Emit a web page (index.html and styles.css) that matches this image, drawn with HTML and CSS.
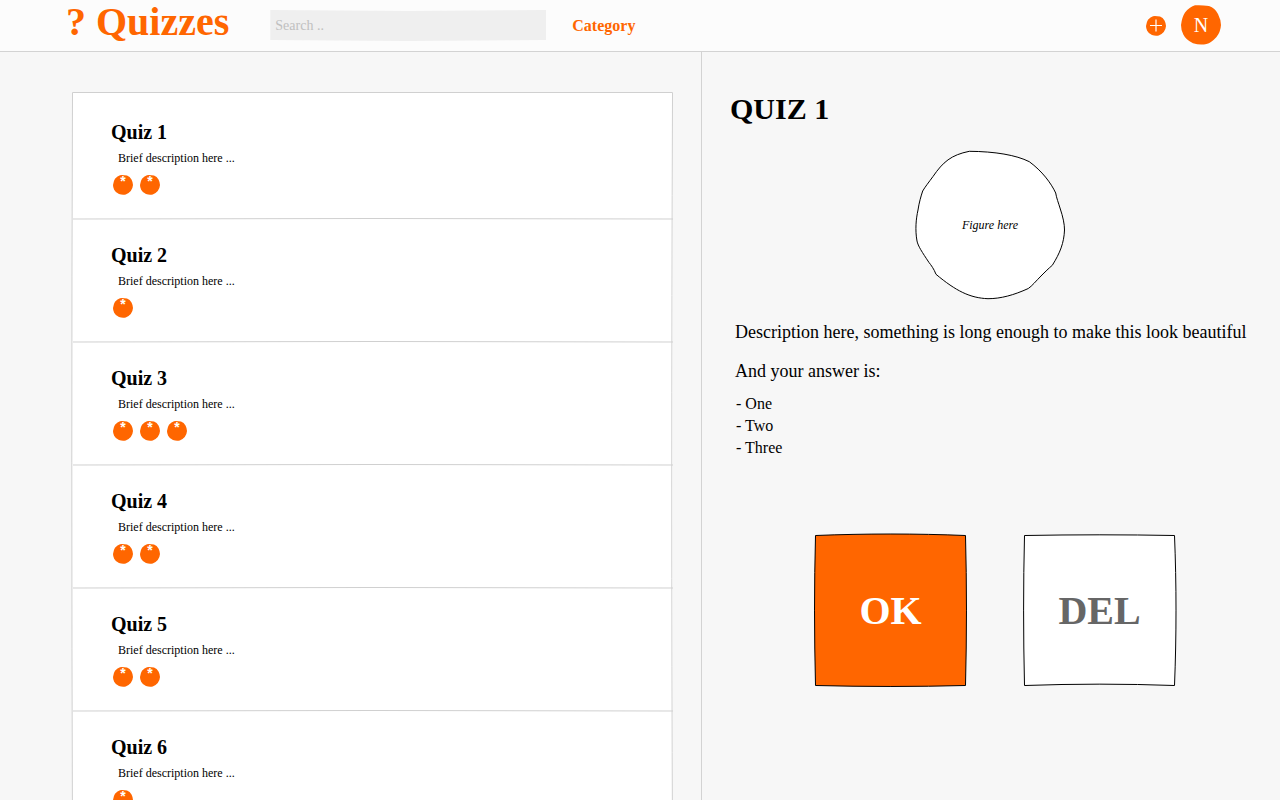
FILE: index.html
```html
<!DOCTYPE html>
<html lang="en">
<head>
<meta charset="utf-8">
<meta name="viewport" content="width=device-width, initial-scale=1">
<title>Quizzes</title>
<link rel="stylesheet" href="styles.css">
</head>
<body>
<svg class="defs" aria-hidden="true">
  <symbol id="blob" viewBox="0 0 40 40"><path d="M14 .3Q20 -.2 28 1Q34 3 37 9Q40 15 40 20Q39.500 27 35.500 32Q30 38 25.500 39Q19 40.500 12 38.200Q5 35 2.300 29.500Q0 25 0 20Q1 12 4 7.500Q9 1.500 14 .3Z"/></symbol>
  <symbol id="rule" viewBox="0 0 600 3" preserveAspectRatio="none"><path d="M0 2Q300 1 600 2"/></symbol>
</svg>
<header class="topbar">
  <a class="logo" href="#">? Quizzes</a>
  <input class="search" type="search" placeholder="Search .." aria-label="Search">
  <a class="category" href="#">Category</a>
  <div class="account">
    <button class="round add" type="button" aria-label="Add quiz">
      <svg viewBox="0 0 20 20" aria-hidden="true"><use class="fill" href="#blob" y="1" width="20" height="20"/><path class="plus" d="M10 4.500V16.500M4 10.500H16"/></svg>
    </button>
    <button class="round avatar" type="button">
      <svg viewBox="0 0 40 40" aria-hidden="true"><use class="fill" href="#blob" width="40" height="40"/></svg>
      <span>N</span>
    </button>
  </div>
</header>
<main class="columns">
  <section class="list-pane" aria-label="Quizzes">
    <div class="card">
      <svg class="edges" viewBox="0 0 601 746" preserveAspectRatio="none" aria-hidden="true"><path d="M.5 746Q-.9 370 .5 .5H600.500Q599 420 600.500 746"/></svg>
      <ul class="quizzes">
        <li class="quiz"><h2>Quiz 1</h2><p>Brief description here ...</p>
          <div class="dots"><span class="dot"><svg aria-hidden="true"><use href="#blob"/></svg><b>*</b></span><span class="dot"><svg aria-hidden="true"><use href="#blob"/></svg><b>*</b></span></div>
          <svg class="rule" aria-hidden="true"><use href="#rule"/></svg></li>
        <li class="quiz"><h2>Quiz 2</h2><p>Brief description here ...</p>
          <div class="dots"><span class="dot"><svg aria-hidden="true"><use href="#blob"/></svg><b>*</b></span></div>
          <svg class="rule" aria-hidden="true"><use href="#rule"/></svg></li>
        <li class="quiz"><h2>Quiz 3</h2><p>Brief description here ...</p>
          <div class="dots"><span class="dot"><svg aria-hidden="true"><use href="#blob"/></svg><b>*</b></span><span class="dot"><svg aria-hidden="true"><use href="#blob"/></svg><b>*</b></span><span class="dot"><svg aria-hidden="true"><use href="#blob"/></svg><b>*</b></span></div>
          <svg class="rule" aria-hidden="true"><use href="#rule"/></svg></li>
        <li class="quiz"><h2>Quiz 4</h2><p>Brief description here ...</p>
          <div class="dots"><span class="dot"><svg aria-hidden="true"><use href="#blob"/></svg><b>*</b></span><span class="dot"><svg aria-hidden="true"><use href="#blob"/></svg><b>*</b></span></div>
          <svg class="rule" aria-hidden="true"><use href="#rule"/></svg></li>
        <li class="quiz"><h2>Quiz 5</h2><p>Brief description here ...</p>
          <div class="dots"><span class="dot"><svg aria-hidden="true"><use href="#blob"/></svg><b>*</b></span><span class="dot"><svg aria-hidden="true"><use href="#blob"/></svg><b>*</b></span></div>
          <svg class="rule" aria-hidden="true"><use href="#rule"/></svg></li>
        <li class="quiz"><h2>Quiz 6</h2><p>Brief description here ...</p>
          <div class="dots"><span class="dot"><svg aria-hidden="true"><use href="#blob"/></svg><b>*</b></span></div>
          <svg class="rule" aria-hidden="true"><use href="#rule"/></svg></li>
      </ul>
    </div>
  </section>
  <section class="detail" aria-label="Selected quiz">
    <h1>QUIZ 1</h1>
    <figure class="figure">
      <svg viewBox="0 0 150 150" aria-hidden="true"><path d="M54.300 1.300C80 1.500 101 5 114.300 11.700C127 21 136 33 140.700 43C141.500 48 143.500 53 145 58C148 67 149.500 74 149.500 80C149 93 145 103 137.300 115.300C134 118 130 122 126 126C121 131 117 136 113.300 138.500C99 145 86 148.700 73 148.700C55 148 41 141 21 124.300C19 119 16 115 14 112.500C7 102 3 96 2 91C0 80 1 69 3 60C4 53 6 46 7.700 41C10 37 14 32 18 26.500C28 12 36 5 54.300 1.300Z"/></svg>
      <figcaption>Figure here</figcaption>
    </figure>
    <div class="text">
      <p>Description here, something is long enough to make this look beautiful</p>
      <p>And your answer is:</p>
      <ul class="answers"><li>- One</li><li>- Two</li><li>- Three</li></ul>
    </div>
    <div class="actions">
      <button class="action ok" type="button">
        <svg viewBox="0 0 152 152" aria-hidden="true"><path d="M.5 1.500C50 -.5 102 -.5 150.500 1.500C151.800 50 151.800 102 150.500 151.500C102 152.800 50 152.800 .5 151.500C-.8 102 -.8 50 .5 1.500Z"/></svg>
        <span>OK</span>
      </button>
      <button class="action del" type="button">
        <svg viewBox="0 0 152 152" aria-hidden="true"><path d="M.5 1.500C50 .6 102 .6 150.500 1.500C152.500 50 152.500 102 150.500 151.500C102 149.700 50 149.700 .5 151.500C-.7 102 -.7 50 .5 1.500Z"/></svg>
        <span>DEL</span>
      </button>
    </div>
  </section>
</main>
</body>
</html>
```

FILE: styles.css
```css
* { box-sizing: border-box; }

body {
  display: flex;
  flex-direction: column;
  height: 100vh;
  margin: 0;
  background: #f7f7f7;
  color: #000;
  font-family: "Liberation Serif", "Times New Roman", serif;
}

h1, h2, p, ul, figure { margin: 0; padding: 0; }
ul { list-style: none; }
a { text-decoration: none; }
button { padding: 0; border: 0; background: none; font-family: inherit; cursor: pointer; }
svg { display: block; overflow: visible; }
.defs { position: absolute; width: 0; height: 0; }

.topbar {
  display: flex;
  align-items: center;
  padding: 0 59px 0 66px;
  border-bottom: 1px solid #d3d3d3;
  background: #fcfcfc;
}

.logo {
  padding-bottom: 8px;
  color: #f60;
  font-size: 40px;
  font-weight: bold;
  line-height: 43px;
}

.search {
  width: 276px;
  height: 31px;
  margin: 0 26px 0 41px;
  padding: 0 5px;
  border: 0;
  background: #efefef;
  clip-path: polygon(0 0, 50% 1px, 100% 0, 100% 30px, 50% 31px, 0 30px);
  font-family: inherit;
  font-size: 14px;
}

.search::placeholder { color: #c0c0c0; }

.category {
  color: #f60;
  font-size: 16px;
  font-weight: bold;
}

.account {
  display: flex;
  align-items: center;
  gap: 15px;
  margin-left: auto;
  padding-bottom: 1px;
}

.round, .dot { display: grid; }
.round > *, .dot > * { grid-area: 1 / 1; }
.fill, .dot svg { fill: #f60; }
.add svg { width: 20px; height: 20px; }
.plus { stroke: #fff; stroke-width: 1.2; }
.avatar { place-items: center; color: #fff; font-size: 20px; }
.avatar svg { width: 40px; height: 40px; }

.columns {
  display: grid;
  flex: 1;
  grid-template-columns: 701fr 579fr;
  min-height: 0;
}

.list-pane {
  padding: 40px 28px 0 72px;
  overflow-y: auto;
  scrollbar-width: none;
}

.card {
  position: relative;
  padding-top: 5px;
  background: #fff;
}

.edges {
  position: absolute;
  inset: 0;
  width: 100%;
  height: 100%;
}

.edges path, .rule {
  fill: none;
  stroke: #d0d0d0;
}

.quizzes { padding-left: 1px; }
.quiz { padding-top: 23px; }
.quiz h2 { padding-left: 38px; font-size: 20px; line-height: 24px; }
.quiz p { padding: 6px 0 9px 45px; font-size: 12px; line-height: 16px; }
.dots { display: flex; gap: 7px; padding: 0 0 22px 40px; }
.dot svg { width: 20px; height: 20px; }

.dot b {
  color: #fff;
  font-family: "Liberation Sans", Arial, sans-serif;
  font-size: 14px;
  line-height: 12px;
  text-align: center;
}

.rule { width: 100%; height: 3px; }

.detail {
  padding: 40px 20px 40px 28px;
  border-left: 1px solid #d3d3d3;
}

.detail h1 { font-size: 30px; line-height: 34px; }

.figure {
  display: grid;
  place-items: center;
  margin-top: 24px;
  padding-right: 10px;
}

.figure > * { grid-area: 1 / 1; }
.figure svg { width: 150px; height: 150px; fill: #fff; stroke: #000; }
.figure figcaption { font-size: 12px; font-style: italic; }

.text { padding: 22px 0 0 5px; font-size: 18px; line-height: 20px; }
.text p { margin-bottom: 19px; }
.text .answers { margin-top: -7px; padding-left: 1px; font-size: 16px; line-height: 22px; }

.actions {
  display: flex;
  flex-wrap: wrap;
  justify-content: center;
  gap: 57px;
  margin-top: 75px;
}

.action {
  display: grid;
  place-items: center;
  font-size: 40px;
  font-weight: bold;
}

.action > * { grid-area: 1 / 1; }
.action svg { width: 152px; height: 152px; stroke: #000; }
.ok { color: #fff; }
.ok svg { fill: #f60; }
.del { color: #666; }
.del svg { fill: #fff; }
```
